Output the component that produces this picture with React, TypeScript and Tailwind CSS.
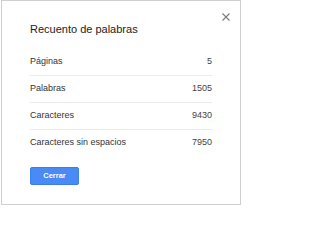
const rows = [
  { label: "Páginas", value: "5" },
  { label: "Palabras", value: "1505" },
  { label: "Caracteres", value: "9430" },
  { label: "Caracteres sin espacios", value: "7950" },
];

export default function App() {
  return (
    <div className="w-[242px] h-[208px] bg-white font-['Liberation_Sans',Arial,sans-serif]">
      <div className="relative ml-px w-[240px] h-[205px] border border-[#cfcfcf] bg-white pl-[28px] pr-[28px] pt-[22px]">
        <svg
          className="absolute right-[10px] top-[12px]"
          width="8"
          height="8"
          viewBox="0 0 8 8"
        >
          <path d="M0.5 0.5L7.5 7.5M7.5 0.5L0.5 7.5" stroke="#7a7a7a" strokeWidth="1.1" />
        </svg>
        <h1 className="text-[11px] leading-[13px] text-[#222]">Recuento de palabras</h1>
        <div className="mt-[13px]">
          {rows.map((r, i) => (
            <div
              key={r.label}
              className={
                i < rows.length - 1
                  ? "flex h-[27px] items-center justify-between border-b border-[#ececec] text-[9px] text-[#333]"
                  : "flex h-[26px] items-center justify-between text-[9px] text-[#333]"
              }
            >
              <span>{r.label}</span>
              <span className="text-[#444]">{r.value}</span>
            </div>
          ))}
        </div>
        <button className="mt-[11px] flex h-[18px] w-[49px] items-center justify-center rounded-[2px] border border-[#3a7ee8] bg-[#4a8af4] text-[7.5px] font-bold text-white">
          Cerrar
        </button>
      </div>
    </div>
  );
}
